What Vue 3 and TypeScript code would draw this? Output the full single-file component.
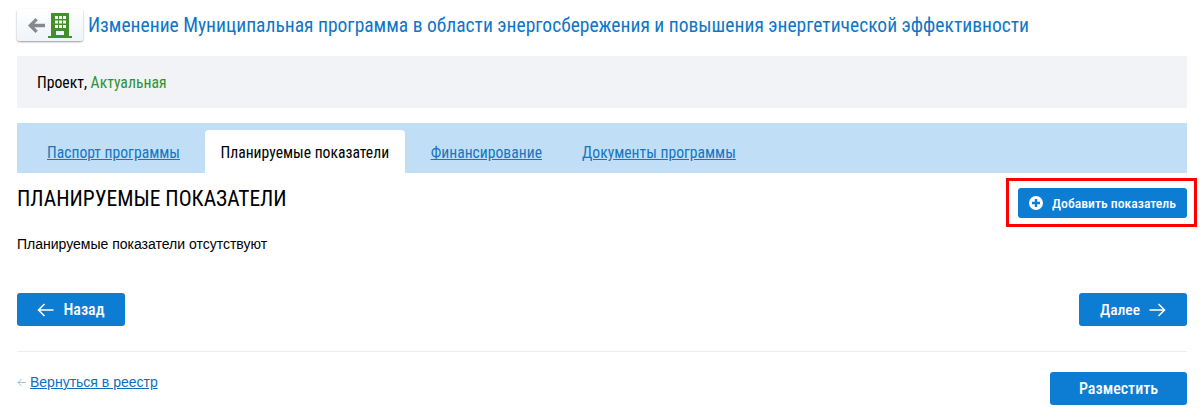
<script setup lang="ts">
const tabs = [
  { label: 'Паспорт программы', active: false },
  { label: 'Планируемые показатели', active: true },
  { label: 'Финансирование', active: false },
  { label: 'Документы программы', active: false }
];
</script>

<template>
  <div class="page">
    <header class="head">
      <button class="back-btn" type="button">
        <svg width="17" height="15" viewBox="0 0 17 15">
          <path d="M7.500 0 L0 7.500 L7.500 15 L9.800 12.700 L6.400 9.300 H17 V5.700 H6.400 L9.800 2.300 Z" fill="#868a8d" />
        </svg>
        <svg width="24" height="25" viewBox="0 0 24 25">
          <path fill-rule="evenodd" fill="#43902a" d="M3 0 H21 V23 H24 V25 H0 V23 H3 Z M7 3 V6 H10 V3 Z M11 3 V6 H14 V3 Z M15 3 V6 H18 V3 Z M7 7.500 V10.500 H10 V7.500 Z M11 7.500 V10.500 H14 V7.500 Z M15 7.500 V10.500 H18 V7.500 Z M7 12 V15 H10 V12 Z M11 12 V15 H14 V12 Z M15 12 V15 H18 V12 Z M8 18 V22 H16 V18 Z" />
        </svg>
      </button>
      <h1 class="title">Изменение Муниципальная программа в области энергосбережения и повышения энергетической эффективности</h1>
    </header>

    <div class="status">Проект, <span class="status-ok">Актуальная</span></div>

    <nav class="tabs">
      <a v-for="tab in tabs" :key="tab.label" class="tab" :class="{ active: tab.active }" href="#">{{ tab.label }}</a>
    </nav>

    <section class="section-head">
      <h2 class="section-title">ПЛАНИРУЕМЫЕ ПОКАЗАТЕЛИ</h2>
      <button class="btn btn-add" type="button">
        <svg width="14" height="14" viewBox="0 0 14 14">
          <path fill-rule="evenodd" fill="#fff" d="M7 0 A7 7 0 1 1 7 14 A7 7 0 1 1 7 0 Z M5.800 3 V5.800 H3 V8.200 H5.800 V11 H8.200 V8.200 H11 V5.800 H8.200 V3 Z" />
        </svg>
        Добавить показатель
      </button>
      <div class="highlight"></div>
    </section>

    <p class="empty">Планируемые показатели отсутствуют</p>

    <div class="nav-row">
      <button class="btn btn-nav btn-back" type="button">
        <svg width="17" height="14" viewBox="0 0 17 14">
          <path d="M16.500 7 H1.500 M7.500 1 L1.500 7 L7.500 13" fill="none" stroke="#fff" stroke-width="1.500" />
        </svg>
        Назад
      </button>
      <button class="btn btn-nav btn-next" type="button">
        Далее
        <svg width="17" height="14" viewBox="0 0 17 14">
          <path d="M0.500 7 H15.500 M9.500 1 L15.500 7 L9.500 13" fill="none" stroke="#fff" stroke-width="1.500" />
        </svg>
      </button>
    </div>

    <div class="foot">
      <div class="return">
        <svg class="return-arrow" width="9" height="9" viewBox="0 0 9 9">
          <path d="M9 4.500 H1 M4.500 1 L1 4.500 L4.500 8" fill="none" stroke="#a9bcd6" stroke-width="1" />
        </svg>
        <a href="#">Вернуться в реестр</a>
      </div>
      <button class="btn btn-place" type="button">Разместить</button>
    </div>
  </div>
</template>

<style scoped>
.page {
  width: 1170px;
  margin-left: 17px;
  font-family: Roboto, "Liberation Sans", sans-serif;
  color: #000;
}

.head {
  display: flex;
  align-items: center;
  height: 56px;
  padding-bottom: 6px;
  box-sizing: border-box;
}

.back-btn {
  display: flex;
  align-items: center;
  justify-content: center;
  gap: 3px;
  width: 66px;
  height: 32px;
  padding: 0;
  border: 0;
  border-radius: 3px;
  background: linear-gradient(#fff, #eef4f9);
  box-shadow: 0 1px 2px rgba(0, 0, 0, 0.4);
}

.title {
  margin: 0 0 0 5px;
  font-size: 19.540px;
  font-weight: 400;
  font-stretch: 75%;
  color: #0f76c6;
  white-space: nowrap;
}

.status {
  height: 52px;
  padding-left: 20px;
  line-height: 53px;
  font-size: 15.700px;
  font-stretch: 75%;
  background: #f1f3f7;
}

.status-ok {
  color: #2c9430;
}

.tabs {
  display: flex;
  align-items: flex-end;
  height: 50px;
  margin-top: 15px;
  padding-left: 10px;
  background: #c0dff7;
}

.tab {
  height: 43px;
  padding: 0 20px;
  line-height: 46px;
  font-size: 15.650px;
  font-stretch: 75%;
  color: #1a75bb;
}

.tab.active {
  margin: 0 6px 0 5px;
  padding: 0 15.500px;
  border-radius: 4px 4px 0 0;
  background: #fff;
  color: #000;
  text-decoration: none;
}

.section-head {
  position: relative;
  display: flex;
  justify-content: space-between;
  align-items: flex-start;
  padding-top: 15px;
}

.section-title {
  margin: 0;
  font-size: 21.500px;
  line-height: 22px;
  font-weight: 400;
  font-stretch: 75%;
}

.btn {
  display: flex;
  align-items: center;
  justify-content: center;
  border: 0;
  border-radius: 3px;
  background: #0d7dd4;
  color: #fff;
  font-family: inherit;
  font-stretch: 75%;
  font-weight: 500;
}

.btn-add {
  gap: 9px;
  width: 169px;
  height: 30px;
  padding: 0;
  font-size: 13.700px;
}

.highlight {
  position: absolute;
  top: 5px;
  right: -10px;
  width: 191px;
  height: 49px;
  box-sizing: border-box;
  border: 3px solid #f00;
}

.empty {
  margin: 18px 0 0;
  font-family: "Liberation Sans", Arial, sans-serif;
  font-size: 14px;
  line-height: 16px;
}

.nav-row {
  display: flex;
  justify-content: space-between;
  margin-top: 41px;
  padding-bottom: 25px;
  border-bottom: 1px solid #eceef0;
}

.btn-nav {
  gap: 9px;
  width: 108px;
  height: 33px;
  font-size: 16px;
}

.btn-next {
  font-size: 15.500px;
}

.foot {
  display: flex;
  justify-content: space-between;
  align-items: flex-start;
  padding-top: 20px;
}

.return {
  display: flex;
  align-items: center;
  gap: 4px;
  font-family: "Liberation Sans", Arial, sans-serif;
  font-size: 14px;
  line-height: 20px;
}

.return a {
  color: #0d6fc0;
}

.btn-place {
  width: 137px;
  height: 33px;
  font-size: 16px;
}
</style>
